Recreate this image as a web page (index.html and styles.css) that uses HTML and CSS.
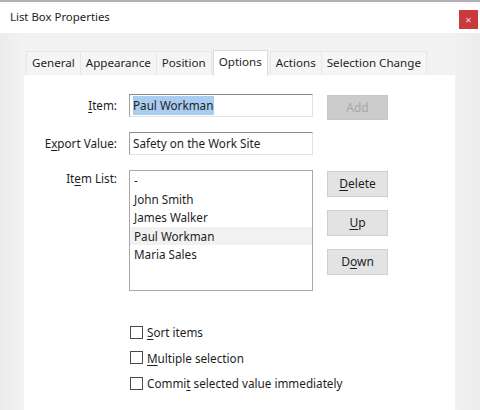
FILE: index.html
```html
<!DOCTYPE html>
<html>
<head>
<meta charset="utf-8">
<link rel="stylesheet" href="styles.css">
</head>
<body>
<div class="window">
  <div class="titlebar">
    <span class="title">List Box Properties</span>
    <span class="close">×</span>
  </div>
  <div class="body">
    <div class="tabs">
      <div class="tab">General</div>
      <div class="tab">Appearance</div>
      <div class="tab">Position</div>
      <div class="tab active">Options</div>
      <div class="tab">Actions</div>
      <div class="tab">Selection Change</div>
    </div>
    <div class="panel">
      <div class="form">
        <div class="label r1"><u>I</u>tem:</div>
        <div class="input r1 c2"><span class="sel">Paul Workman</span></div>
        <div class="btn disabled r1 c3">Add</div>

        <div class="label r2">E<u>x</u>port Value:</div>
        <div class="input r2 c2">Safety on the Work Site</div>

        <div class="label r3 top">It<u>e</u>m List:</div>
        <div class="listbox r3 c2">
          <div class="item">-</div>
          <div class="item">John Smith</div>
          <div class="item">James Walker</div>
          <div class="item selected">Paul Workman</div>
          <div class="item">Maria Sales</div>
        </div>
        <div class="btncol r3 c3">
          <div class="btn"><u>D</u>elete</div>
          <div class="btn"><u>U</u>p</div>
          <div class="btn">D<u>o</u>wn</div>
        </div>
      </div>
      <div class="checks">
        <label class="check"><span class="box"></span><span><u>S</u>ort items</span></label>
        <label class="check"><span class="box"></span><span><u>M</u>ultiple selection</span></label>
        <label class="check"><span class="box"></span><span>Commi<u>t</u> selected value immediately</span></label>
      </div>
    </div>
  </div>
</div>
</body>
</html>
```

FILE: styles.css
```css
* { box-sizing: border-box; }
html, body { margin: 0; padding: 0; }
body {
  width: 480px;
  height: 410px;
  overflow: hidden;
  font-family: "Noto Sans", "Open Sans", sans-serif;
  font-size: 11.7px;
  color: #1e1e1e;
  background: #ffffff;
}
.window {
  width: 480px;
  height: 410px;
  display: flex;
  flex-direction: column;
  border-top: 2px solid #b2b2b2;
}
.titlebar {
  height: 31px;
  flex: none;
  display: flex;
  align-items: center;
  justify-content: space-between;
  padding: 0 2px 0 10px;
  background: #ffffff;
}
.title {
  font-size: 11.4px;
  color: #222;
  margin-top: -2px;
}
.close {
  width: 19px;
  height: 19px;
  background: #c9393d;
  color: #f4d6d6;
  font-size: 11px;
  line-height: 19px;
  text-align: center;
  margin-top: 4px;
}
.body {
  flex: 1;
  background: linear-gradient(to right, #ececec 0, #f2f2f2 24px, #f2f2f2 455px, #ececec 480px);
  padding: 17px 25px 0 24px;
  display: flex;
  flex-direction: column;
}
.tabs {
  display: flex;
  align-items: flex-end;
  padding-left: 2px;
  height: 25px;
  flex: none;
  position: relative;
  z-index: 1;
}
.tab {
  height: 23px;
  padding: 0 5px;
  line-height: 22px;
  background: #f5f5f5;
  border: 1px solid #e6e6e6;
  border-bottom: none;
  margin-right: -1px;
  margin-bottom: 1px;
  color: #1e1e1e;
  font-size: 11.6px;
}
.tab.active {
  height: 26px;
  background: #ffffff;
  border-color: #dcdcdc;
  padding: 0 5px;
  line-height: 22px;
  margin-bottom: -1px;
  margin-right: 2px;
  margin-left: 2px;
}
.panel {
  flex: 1;
  background: #ffffff;
  padding: 19px 0 0 0;
}
.form {
  display: grid;
  grid-template-columns: 93px 184px 61px;
  column-gap: 12px;
  grid-template-rows: 23px 23px 121px;
  row-gap: 15px;
}
.r1 { grid-row: 1; }
.r2 { grid-row: 2; }
.r3 { grid-row: 3; }
.label { grid-column: 1; }
.c2 { grid-column: 2; }
.c3 { grid-column: 3; margin-left: 2px; }
.label {
  text-align: right;
  line-height: 23px;
}
.label.top { line-height: 16px; }
.input {
  height: 23px;
  border: 1px solid #e3e3e3;
  border-top-color: #8a8a8a;
  border-left-color: #a0a0a0;
  padding: 0 3px;
  line-height: 20px;
  white-space: nowrap;
}
.sel {
  background: #a9cdf0;
  padding: 1px 1px 2px 0;
}
.btn {
  height: 26px;
  width: 61px;
  background: #e3e3e3;
  border: 1px solid #cfcfcf;
  text-align: center;
  line-height: 24px;
  font-size: 12px;
}
.form > .btn.disabled {
  color: #a8a8a8;
  background: #cccccc;
  border-color: #c6c6c6;
  height: 25px;
  margin-top: 1px;
}
.btncol {
  display: flex;
  flex-direction: column;
  gap: 13px;
  padding-top: 1px;
}
.listbox {
  border: 1px solid #a8a8a8;
  padding-top: 0;
}
.item {
  height: 18.6px;
  line-height: 18px;
  padding-left: 4px;
}
.item.selected { background: #f1f1f1; }
.checks {
  display: flex;
  flex-direction: column;
  gap: 7px;
  margin-top: 32px;
  padding-left: 106px;
}
.check {
  display: flex;
  align-items: center;
  gap: 4px;
  height: 18.5px;
}
.box {
  width: 13px;
  height: 13px;
  border: 1px solid #4a4a4a;
  background: #fff;
}
u { text-decoration-thickness: 1px; text-underline-offset: 2px; }
```
